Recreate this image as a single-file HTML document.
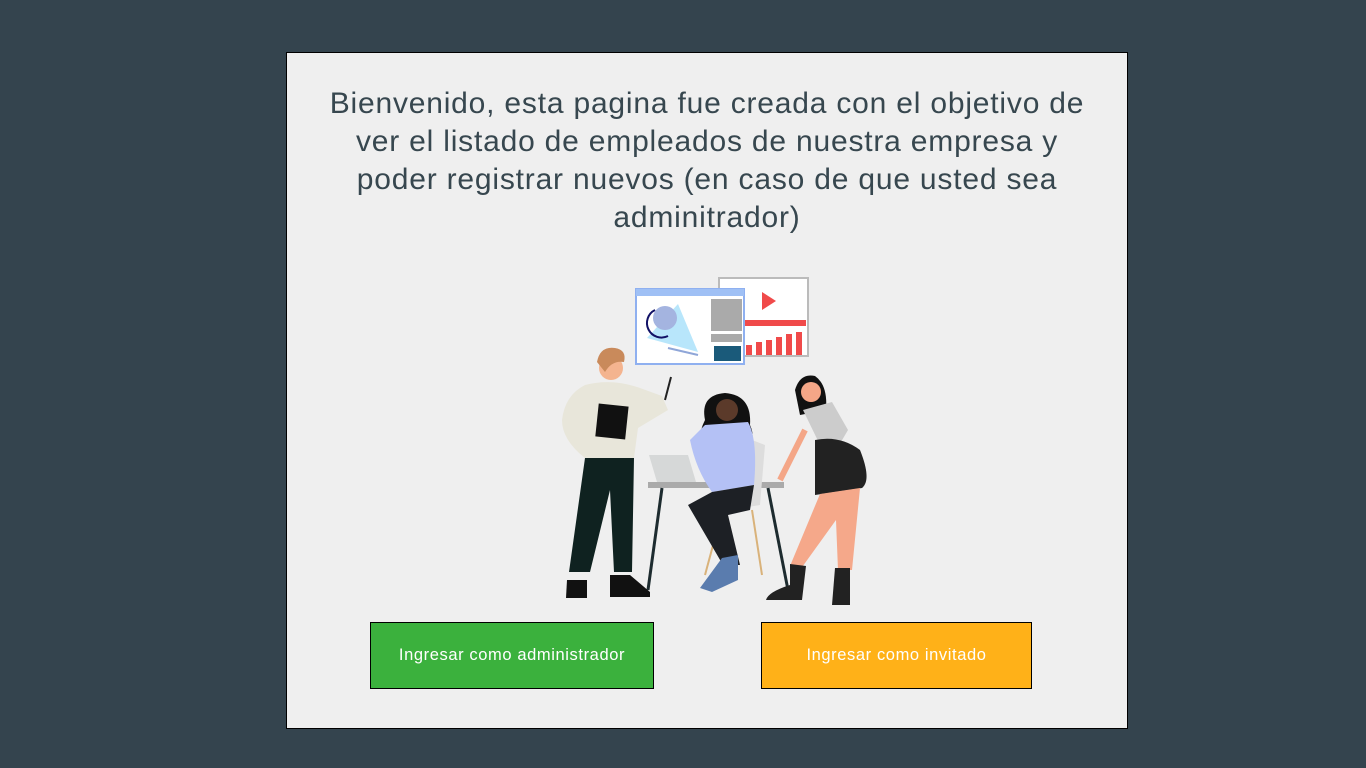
<!DOCTYPE html>
<html><head><meta charset="utf-8"><style>
html,body{margin:0;padding:0;width:1366px;height:768px;background:#34444e;overflow:hidden;font-family:"Liberation Sans",sans-serif}
.card{position:absolute;left:286px;top:52px;width:840px;height:675px;background:#efefef;border:1px solid #000}
h1{position:absolute;left:287px;top:85px;width:840px;margin:0;text-align:center;font-weight:normal;font-size:30px;letter-spacing:0.8px;line-height:38px;color:#37474f}
.btn{position:absolute;top:622px;border:1px solid #000;color:#fff;font-size:16.5px;letter-spacing:0.6px;display:flex;align-items:center;justify-content:center;box-sizing:border-box;height:67px}
svg{position:absolute;left:0;top:0}
</style></head><body>
<div class="card"></div>
<h1>Bienvenido, esta pagina fue creada con el objetivo de<br>ver el listado de empleados de nuestra empresa y<br>poder registrar nuevos (en caso de que usted sea<br>adminitrador)</h1>
<svg width="1366" height="768" viewBox="0 0 1366 768">
 <rect x="719" y="278" width="89" height="78" fill="#fff" stroke="#bbb" stroke-width="2"/>
 <polygon points="762,292 762,310 776,301" fill="#f04a4a"/>
 <rect x="742" y="320" width="64" height="6" fill="#f04a4a"/>
 <rect x="746" y="345" width="6" height="10" fill="#f04a4a"/><rect x="756" y="342" width="6" height="13" fill="#f04a4a"/><rect x="766" y="340" width="6" height="15" fill="#f04a4a"/><rect x="776" y="337" width="6" height="18" fill="#f04a4a"/><rect x="786" y="334" width="6" height="21" fill="#f04a4a"/><rect x="796" y="332" width="6" height="23" fill="#f04a4a"/>
 <rect x="636" y="289" width="108" height="75" fill="#fff" stroke="#8fb0f0" stroke-width="2"/>
 <rect x="636" y="289" width="108" height="7" fill="#9fc0f5"/>
 <rect x="711" y="299" width="31" height="32" fill="#aaa"/><rect x="711" y="334" width="31" height="8" fill="#aaa"/>
 <rect x="714" y="346" width="27" height="15" fill="#1a5a7a"/>
 <polygon points="647,338 678,304 698,352" fill="#b8e6fb"/>
 <circle cx="665" cy="318" r="12" fill="#a4b4e0"/>
 <path d="M655,310 A14,14 0 0 0 668,336" fill="none" stroke="#116" stroke-width="2"/>
 <line x1="668" y1="348" x2="698" y2="355" stroke="#8fa6d8" stroke-width="2"/>
 <rect x="648" y="482" width="136" height="6" fill="#aaa"/>
 <line x1="662" y1="488" x2="648" y2="590" stroke="#1d2b2f" stroke-width="3"/>
 <line x1="768" y1="488" x2="788" y2="590" stroke="#1d2b2f" stroke-width="3"/>
 <polygon points="649,455 688,455 696,482 657,482" fill="#d6d8d8"/>
 <path d="M752,440 L765,445 L760,505 L718,512 Z" fill="#ddd"/>
 <line x1="722" y1="512" x2="705" y2="575" stroke="#d9b27a" stroke-width="2"/><line x1="752" y1="510" x2="762" y2="575" stroke="#d9b27a" stroke-width="2"/>
 <circle cx="611" cy="368" r="12" fill="#f4b48f"/>
 <path d="M597,362 Q600,346 615,348 Q627,350 624,362 Q612,360 605,372 Z" fill="#c98a5b"/>
 <path d="M585,385 Q612,378 640,388 L662,396 L668,410 L638,428 L634,458 L585,458 Q562,440 562,420 Q565,395 585,385 Z" fill="#e8e6da"/>
 <rect x="597" y="405" width="30" height="33" fill="#111" transform="rotate(6 612 421)"/>
 <line x1="665" y1="400" x2="671" y2="377" stroke="#222" stroke-width="2"/>
 <path d="M585,458 L634,458 L632,572 L614,572 L610,490 L590,572 L569,572 Z" fill="#0f2220"/>
 <path d="M567,580 L587,580 L587,598 L566,598 Z" fill="#111"/><path d="M610,575 L630,575 L650,592 L650,597 L610,597 Z" fill="#111"/>
 <path d="M705,420 Q700,395 725,393 Q752,395 750,425 Q757,440 745,450 L705,450 Q695,440 705,420 Z" fill="#111"/>
 <circle cx="727" cy="410" r="11" fill="#5b3a2a"/>
 <path d="M705,425 L748,422 Q758,440 754,485 L712,492 Q696,470 690,440 Z" fill="#b4c1f5"/>
 <path d="M712,492 L754,485 L750,510 L728,515 L740,565 L723,565 L688,505 Z" fill="#1d2025"/>
 <path d="M722,558 L738,555 L738,580 L712,592 L700,588 Z" fill="#5a7cae"/>
 <path d="M795,390 Q800,373 815,376 Q828,385 826,410 L800,415 Z" fill="#111"/>
 <circle cx="811" cy="392" r="10" fill="#f4a687"/>
 <path d="M803,410 L832,402 L848,430 L838,447 L820,445 Z" fill="#ccc"/>
 <path d="M815,440 Q840,435 860,450 Q872,480 862,488 L815,495 Z" fill="#222"/>
 <path d="M820,494 L860,488 L852,570 L838,570 L836,520 L800,570 L790,566 Z" fill="#f5a88a"/>
 <line x1="805" y1="430" x2="780" y2="480" stroke="#f4a687" stroke-width="6"/>
 <path d="M790,564 L806,566 L802,600 L766,600 Q768,592 790,585 Z" fill="#222"/>
 <path d="M835,568 L850,568 L850,605 L832,605 Z" fill="#222"/>
</svg>
<div class="btn" style="left:370px;width:284px;background:#3bb13d">Ingresar como administrador</div>
<div class="btn" style="left:761px;width:271px;background:#ffb118">Ingresar como invitado</div>
</body></html>
